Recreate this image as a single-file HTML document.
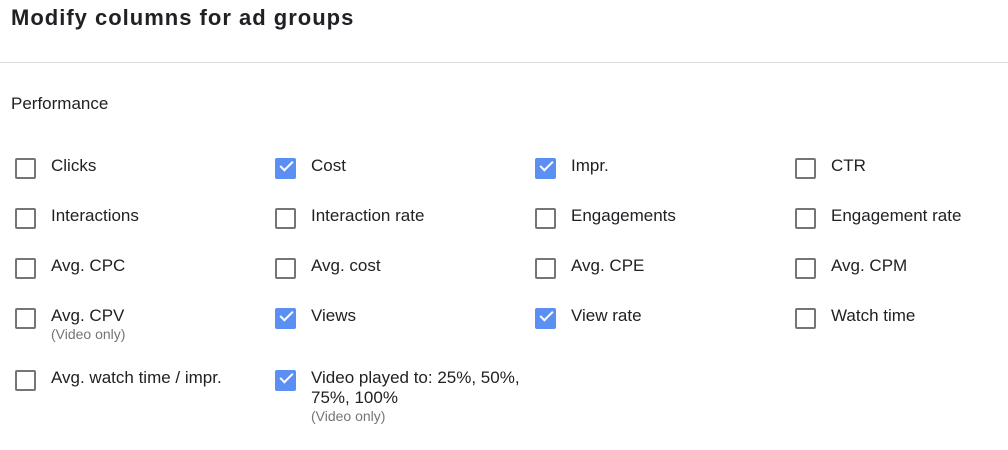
<html><head><style>
body{margin:0;width:1008px;height:450px;background:#fff;font-family:"Liberation Sans",Arial,sans-serif;color:#212121;position:relative;overflow:hidden}
.t{position:absolute;left:11px;top:5px;font-size:22px;font-weight:bold;color:#202124;letter-spacing:1px}
.hr{position:absolute;left:0;top:62px;width:1008px;height:1px;background:#ddd}
.p{position:absolute;left:11px;top:94px;font-size:17px;color:#202124}
.i{position:absolute;font-size:17px;color:#202124;padding-left:36px;line-height:20px;width:220px}
.i:before{content:"";position:absolute;left:0;top:2px;width:17px;height:17px;border:2px solid #757575;border-radius:2px}
.c:before{background:#5b8ff2;border-color:#5b8ff2}
.c:after{content:"";position:absolute;left:5px;top:5px;width:11px;height:5px;border-left:2px solid #fff;border-bottom:2px solid #fff;transform:rotate(-45deg)}
.s{font-size:14px;color:#757575;display:block;line-height:16px}
</style></head><body>
<div class="t">Modify columns for ad groups</div>
<div class="hr"></div>
<div class="p">Performance</div>
<div class="i" style="left:15px;top:156px">Clicks</div>
<div class="i c" style="left:275px;top:156px">Cost</div>
<div class="i c" style="left:535px;top:156px">Impr.</div>
<div class="i" style="left:795px;top:156px">CTR</div>
<div class="i" style="left:15px;top:206px">Interactions</div>
<div class="i" style="left:275px;top:206px">Interaction rate</div>
<div class="i" style="left:535px;top:206px">Engagements</div>
<div class="i" style="left:795px;top:206px">Engagement rate</div>
<div class="i" style="left:15px;top:256px">Avg. CPC</div>
<div class="i" style="left:275px;top:256px">Avg. cost</div>
<div class="i" style="left:535px;top:256px">Avg. CPE</div>
<div class="i" style="left:795px;top:256px">Avg. CPM</div>
<div class="i" style="left:15px;top:306px">Avg. CPV<span class="s">(Video only)</span></div>
<div class="i c" style="left:275px;top:306px">Views</div>
<div class="i c" style="left:535px;top:306px">View rate</div>
<div class="i" style="left:795px;top:306px">Watch time</div>
<div class="i" style="left:15px;top:368px">Avg. watch time / impr.</div>
<div class="i c" style="left:275px;top:368px;width:220px">Video played to: 25%, 50%, 75%, 100%<span class="s">(Video only)</span></div>
</body></html>
